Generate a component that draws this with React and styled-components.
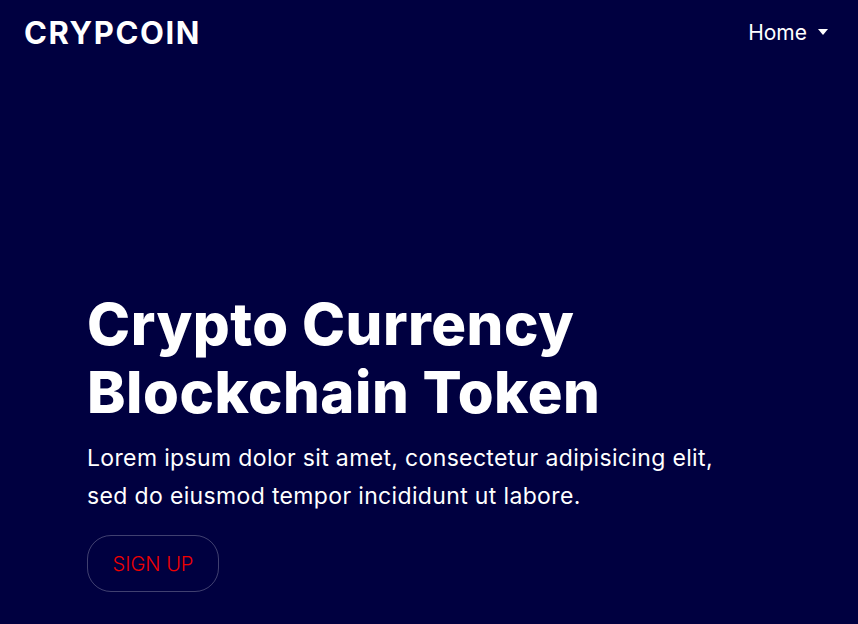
import React from "react";
import styled, { createGlobalStyle } from "styled-components";

const GlobalStyle = createGlobalStyle`
    html, body {
        margin: 0;
        padding: 0;
        background: #000040;
    }
    * {
        box-sizing: border-box;
    }
`;

const Page = styled.div`
    min-height: 624px;
    background: #000040;
    color: #fff;
    font-family: Inter, "Noto Sans", sans-serif;
    overflow: hidden;
`;

const Nav = styled.nav`
    display: flex;
    justify-content: space-between;
    align-items: center;
    height: 64px;
    padding: 0 30px 0 24px;
`;

const Logo = styled.div`
    font-size: 31px;
    font-weight: 700;
    letter-spacing: 1.6px;
`;

const NavItem = styled.div`
    display: flex;
    align-items: center;
    gap: 11px;
    font-size: 21px;
    font-weight: 400;
`;

const Caret = styled.span`
    width: 0;
    height: 0;
    border-left: 5px solid transparent;
    border-right: 5px solid transparent;
    border-top: 6px solid #fff;
`;

const Hero = styled.section`
    padding: 226px 0 0 87px;
`;

const Title = styled.h1`
    margin: 0;
    font-size: 58px;
    line-height: 68px;
    font-weight: 800;
    letter-spacing: 0.5px;
`;

const Lead = styled.p`
    margin: 13px 0 0;
    font-size: 23px;
    line-height: 38px;
    font-weight: 400;
    letter-spacing: 0.35px;
`;

const SignUp = styled.button`
    margin-top: 20px;
    width: 132px;
    height: 57px;
    border: 1px solid rgba(255, 255, 255, 0.25);
    border-radius: 24px;
    background: transparent;
    color: #f00000;
    font-family: inherit;
    font-size: 20px;
    font-weight: 300;
`;

export default function App() {
    return (
        <Page>
            <GlobalStyle />
            <Nav>
                <Logo>CRYPCOIN</Logo>
                <NavItem>
                    Home <Caret />
                </NavItem>
            </Nav>
            <Hero>
                <Title>
                    Crypto Currency
                    <br />
                    Blockchain Token
                </Title>
                <Lead>
                    Lorem ipsum dolor sit amet, consectetur adipisicing elit,
                    <br />
                    sed do eiusmod tempor incididunt ut labore.
                </Lead>
                <SignUp>SIGN UP</SignUp>
            </Hero>
        </Page>
    );
}
